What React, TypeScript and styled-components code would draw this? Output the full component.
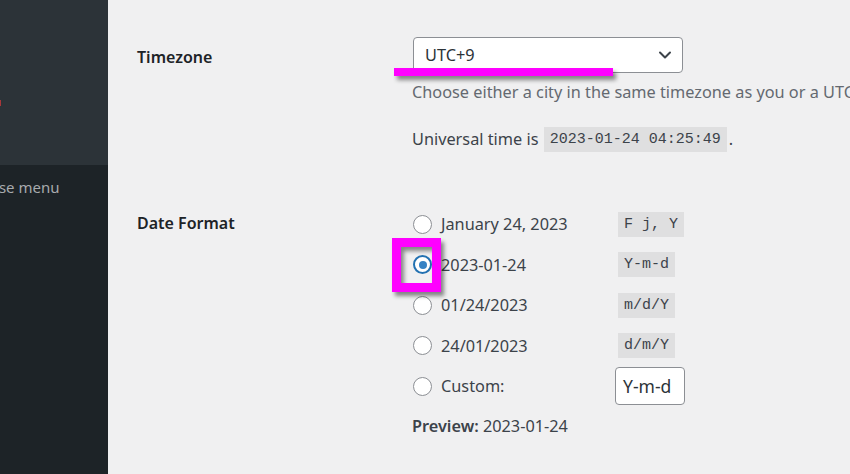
import styled, { createGlobalStyle } from 'styled-components'

const GlobalStyle = createGlobalStyle`
  html, body {
    margin: 0;
    padding: 0;
    overflow: hidden;
    background: #f0f0f1;
  }
  body {
    font-family: 'Noto Sans', 'Open Sans', sans-serif;
    color: #3c434a;
  }
`

const Page = styled.div`
  position: relative;
  display: flex;
  width: 850px;
  height: 474px;
  overflow: hidden;
`

const Sidebar = styled.aside`
  display: flex;
  flex-direction: column;
  width: 108px;
  flex-shrink: 0;
  overflow: hidden;
`

const MenuTop = styled.div`
  height: 165px;
  background: #2c3338;
  padding-top: 100px;
  box-sizing: border-box;
`

const RedMark = styled.span`
  display: block;
  width: 1px;
  height: 6px;
  background: #a8373a;
`

const MenuBottom = styled.div`
  flex: 1;
  background: #1d2327;
  padding-top: 11px;
`

const Collapse = styled.div`
  margin-left: -45px;
  white-space: nowrap;
  font-size: 15px;
  color: #a7aaad;
  line-height: 22px;
`

const Main = styled.main`
  flex: 1;
  padding: 37px 0 0 29px;
  white-space: nowrap;
`

const FormRow = styled.div<{ $gap?: number }>`
  display: grid;
  grid-template-columns: 275px 1fr;
  margin-bottom: ${({ $gap }) => $gap ?? 0}px;
`

const Label = styled.div<{ $top: number }>`
  font-weight: 600;
  font-size: 16px;
  color: #1d2327;
  padding-top: ${({ $top }) => $top}px;
  line-height: 22px;
`

const Field = styled.div`
  display: flex;
  flex-direction: column;
`

const Select = styled.div`
  display: flex;
  align-items: center;
  justify-content: space-between;
  box-sizing: border-box;
  width: 270px;
  height: 36px;
  margin-left: 1px;
  padding: 0 10px 0 11px;
  background: #fff;
  border: 1px solid #8c8f94;
  border-radius: 4px;
  font-size: 16.3px;
  color: #2c3338;
`

const Help = styled.p`
  margin: 8px 0 0;
  font-size: 16.3px;
  line-height: 22px;
  color: #646970;
`

const Para = styled.p`
  margin: 24px 0 0;
  font-size: 16.3px;
  line-height: 25px;
  color: #3c434a;
`

const Code = styled.code`
  display: inline-block;
  font-family: 'Liberation Mono', 'DejaVu Sans Mono', monospace;
  font-size: 15px;
  line-height: 25px;
  padding: 0 6px;
  margin: 0 2px 0 1px;
  background: rgba(0, 0, 0, 0.07);
  color: #3c434a;
  vertical-align: top;
`

const Options = styled.div`
  display: flex;
  flex-direction: column;
`

const Option = styled.label`
  display: grid;
  grid-template-columns: 205px auto;
  align-items: center;
  height: 40.5px;
`

const Choice = styled.span`
  display: flex;
  align-items: center;
  gap: 9px;
  font-size: 16.3px;
  color: #3c434a;
`

const Radio = styled.span<{ $checked?: boolean }>`
  position: relative;
  box-sizing: border-box;
  width: 19px;
  height: 19px;
  margin-left: 1px;
  border-radius: 50%;
  background: #fff;
  border: ${({ $checked }) => ($checked ? '2.5px solid #2271b1' : '1px solid #8c8f94')};

  &::after {
    content: '';
    display: ${({ $checked }) => ($checked ? 'block' : 'none')};
    position: absolute;
    inset: 0;
    margin: auto;
    width: 8px;
    height: 8px;
    border-radius: 50%;
    background: #3582c4;
  }
`

const FormatInput = styled.span`
  display: inline-flex;
  align-items: center;
  box-sizing: border-box;
  width: 70px;
  height: 38px;
  margin-left: -2px;
  padding: 0 7px;
  background: #fff;
  border: 1px solid #8c8f94;
  border-radius: 4px;
  font-size: 17.5px;
  color: #2c3338;
`

const Preview = styled.p`
  margin: 8px 0 0;
  font-size: 16.3px;
  line-height: 22px;
  color: #3c434a;

  strong {
    font-weight: 600;
  }
`

const Underline = styled.div`
  position: absolute;
  left: 394px;
  top: 68px;
  width: 219px;
  height: 8px;
  background: #ff00ff;
  box-shadow: 3px 4px 4px rgba(0, 0, 0, 0.45);
`

const Highlight = styled.div`
  position: absolute;
  left: 392px;
  top: 238px;
  width: 49px;
  height: 54px;
  box-sizing: border-box;
  border: 9px solid #ff00ff;
  box-shadow: 3px 4px 4px rgba(0, 0, 0, 0.45), inset 3px 4px 4px rgba(0, 0, 0, 0.45);
`

const Chevron = () => (
  <svg width='14' height='14' viewBox='0 0 14 14' fill='none'>
    <path d='M2 4.5 L7 9.5 L12 4.5' stroke='#3c434a' strokeWidth='2' strokeLinecap='round' strokeLinejoin='round' />
  </svg>
)

const formats = [
  { label: 'January 24, 2023', code: 'F j, Y' },
  { label: '2023-01-24', code: 'Y-m-d', checked: true },
  { label: '01/24/2023', code: 'm/d/Y' },
  { label: '24/01/2023', code: 'd/m/Y' },
]

export default function App() {
  return (
    <Page>
      <GlobalStyle />
      <Sidebar>
        <MenuTop>
          <RedMark />
        </MenuTop>
        <MenuBottom>
          <Collapse>Collapse menu</Collapse>
        </MenuBottom>
      </Sidebar>
      <Main>
        <FormRow $gap={52}>
          <Label $top={9}>Timezone</Label>
          <Field>
            <Select>
              <span>UTC+9</span>
              <Chevron />
            </Select>
            <Help>Choose either a city in the same timezone as you or a UTC (Coordinated Universal Time) time offset.</Help>
            <Para>
              Universal time is <Code>2023-01-24 04:25:49</Code>.
            </Para>
          </Field>
        </FormRow>
        <FormRow>
          <Label $top={8}>Date Format</Label>
          <Field>
            <Options>
              {formats.map((f) => (
                <Option key={f.code}>
                  <Choice>
                    <Radio $checked={f.checked} />
                    {f.label}
                  </Choice>
                  <span>
                    <Code>{f.code}</Code>
                  </span>
                </Option>
              ))}
              <Option>
                <Choice>
                  <Radio />
                  Custom:
                </Choice>
                <span>
                  <FormatInput>Y-m-d</FormatInput>
                </span>
              </Option>
            </Options>
            <Preview>
              <strong>Preview:</strong> 2023-01-24
            </Preview>
          </Field>
        </FormRow>
      </Main>
      <Underline />
      <Highlight />
    </Page>
  )
}
